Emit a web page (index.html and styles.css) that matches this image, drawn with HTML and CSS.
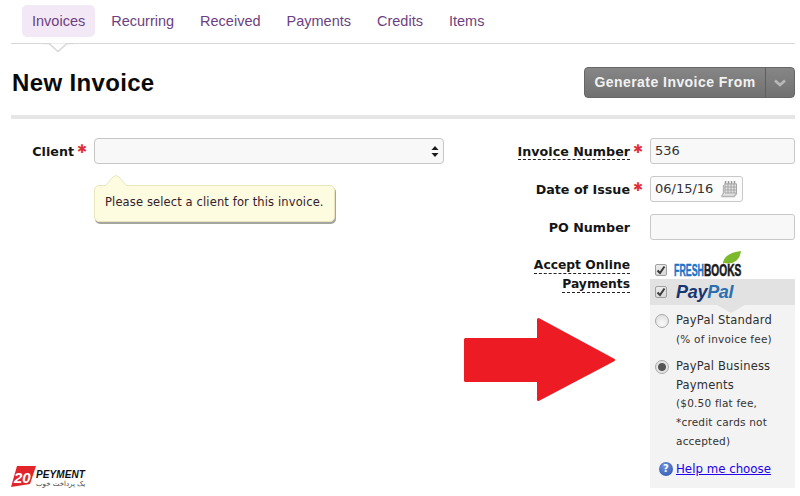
FILE: index.html
```html
<!DOCTYPE html>
<html lang="en">
<head>
<meta charset="utf-8">
<title>New Invoice</title>
<link rel="stylesheet" href="styles.css">
</head>
<body>
<div class="page">
  <nav class="tabs">
    <a class="tab active">Invoices</a>
    <a class="tab">Recurring</a>
    <a class="tab">Received</a>
    <a class="tab">Payments</a>
    <a class="tab">Credits</a>
    <a class="tab">Items</a>
    <svg class="notch" width="30" height="10" viewBox="0 0 30 10"><path d="M0 0.5H6L15 8.5L24 0.5H30" fill="#fff" stroke="#d6d6d6" stroke-width="1.4"/></svg>
  </nav>

  <header class="head">
    <h1>New Invoice</h1>
    <div class="gen">
      <span class="gen-main">Generate Invoice From</span>
      <span class="gen-caret"><svg width="14" height="8" viewBox="0 0 14 8"><path d="M2 1.500L7 6L12 1.500" fill="none" stroke="#b9b9b9" stroke-width="2.600"/></svg></span>
    </div>
  </header>

  <main class="form">
    <section class="left">
      <div class="client">
        <label class="lab client-lab"><span>Client</span><i class="star">✱</i></label>
        <div class="select">
          <svg class="updown" width="8" height="11" viewBox="0 0 8 11"><path d="M4 0L7.500 4H0.500ZM4 11L0.500 7H7.500Z" fill="#1a1a1a"/></svg>
        </div>
      </div>
      <div class="tip">
        <svg class="tip-arrow" width="22" height="11" viewBox="0 0 22 11"><path d="M0 11L8 2Q11 -1 14 2L22 11" fill="#fdfbe0" stroke="#e9e6bd"/></svg>
        Please select a client for this invoice.
      </div>
    </section>

    <section class="right">
      <label class="lab"><span class="dash">Invoice Number</span><i class="star">✱</i></label>
      <div class="input">536</div>

      <label class="lab"><span>Date of Issue</span><i class="star">✱</i></label>
      <div class="input date">06/15/16
        <svg class="cal" width="18" height="19" viewBox="0 0 18 19"><path d="M4 3H17V14L15 17H4L3 13Z" fill="#e2e2e2"/><path d="M1.500 16.500L3.500 13V5M1.500 16.500H14L17 13" fill="none" stroke="#b4b4b4" stroke-width="1.300"/><path d="M5.500 1V4M8.500 1V4M11.500 1V4M14.500 1V4" stroke="#9a9a9a" stroke-width="1.500"/><path d="M5 4H16.500V13H5ZM8 4V13M11 4V13M14 4V13M5 7H16.500M5 10H16.500" fill="none" stroke="#a6a6a6" stroke-width="1"/></svg>
      </div>

      <label class="lab"><span>PO Number</span><i class="star"></i></label>
      <div class="input"></div>

      <label class="lab online"><span class="dash">Accept Online</span><span class="dash">Payments</span></label>
      <div class="pay">
        <div class="fresh">
          <span class="check"><svg width="10" height="10" viewBox="0 0 10 10"><path d="M1.500 5.500L4 8L8.500 1.500" fill="none" stroke="#3a3a3a" stroke-width="2"/></svg></span>
          <svg class="fresh-logo" width="70" height="29" viewBox="0 0 70 29">
            <path d="M50 14C50 7 57 2 68 1C67 9 62 15 51 13Z" fill="#7cb92d"/>
            <text transform="translate(1 25.500) scale(0.52 1)" class="fb-a">FRESH</text>
            <text transform="translate(31 25.500) scale(0.6 1)" class="fb-b">BOOKS</text>
          </svg>
        </div>
        <div class="pp-band">
          <span class="check"><svg width="10" height="10" viewBox="0 0 10 10"><path d="M1.500 5.500L4 8L8.500 1.500" fill="none" stroke="#3a3a3a" stroke-width="2"/></svg></span>
          <span class="pp-logo"><b>Pay</b><b class="pal">Pal</b></span>
          <svg class="pp-arrow" width="28" height="8" viewBox="0 0 28 8"><path d="M0 0H28L14 8Z" fill="#e2e2e2"/></svg>
        </div>
        <div class="pp-panel">
          <div class="opt">
            <span class="radio"></span>
            <div class="opt-text"><div>PayPal Standard</div><small>(% of invoice fee)</small></div>
          </div>
          <div class="opt">
            <span class="radio on"></span>
            <div class="opt-text"><div>PayPal Business</div><div>Payments</div><small>($0.50 flat fee,</small><small>*credit cards not</small><small>accepted)</small></div>
          </div>
          <div class="help"><span class="q">?</span><a class="help-link">Help me choose</a></div>
        </div>
      </div>
    </section>
  </main>
</div>

<svg class="arrow" width="152" height="84" viewBox="0 0 152 84"><path d="M2.500 21.500H75.500V1.500L150.500 42L75.500 81.500V62.500H2.500Z" fill="#ed1c24" stroke="#ed1c24" stroke-width="3" stroke-linejoin="round"/></svg>

<div class="brand">
  <svg class="brand-mark" width="25" height="21" viewBox="0 0 25 21"><path d="M6 0H25L19 18L0 21Z" fill="#e1252b"/><text x="3" y="17" class="brand-num">20</text></svg>
  <div class="brand-text"><b>PEYMENT</b><span dir="rtl" lang="fa">یک پرداخت خوب</span></div>
</div>
</body>
</html>
```
FILE: styles.css
```css
* { box-sizing: border-box; }
html, body { margin: 0; padding: 0; }
body {
  width: 800px;
  height: 496px;
  overflow: hidden;
  position: relative;
  background: #fff;
  font-family: "DejaVu Sans", sans-serif;
  font-size: 12px;
  color: #222;
}
.page { padding: 5px 5px 0 11px; }

/* tabs */
.tabs {
  position: relative;
  display: flex;
  gap: 6px;
  height: 39px;
  padding: 0 0 0 11px;
  align-items: flex-start;
  border-bottom: 1.500px solid #d8d8d8;
  font-family: "Liberation Sans", sans-serif;
  font-size: 14.500px;
  color: #6d3f80;
}
.tab { height: 32px; line-height: 32px; padding: 0 10px; border-radius: 5px; }
.tab.active { background: #f3e9f6; }
.notch { position: absolute; left: 32px; top: 38px; }

/* heading */
.head {
  display: flex;
  justify-content: space-between;
  align-items: flex-start;
  height: 75px;
  padding-top: 23px;
  border-bottom: 4px solid #e6e6e6;
}
h1 {
  margin: 0 0 0 1px;
  font-family: "Liberation Sans", sans-serif;
  font-size: 24px;
  line-height: 32px;
  font-weight: 700;
  letter-spacing: 0.350px;
  color: #0a0a0a;
}
.gen {
  display: flex;
  height: 31px;
  width: 211px;
  background: linear-gradient(#868686, #717171);
  border: 1px solid #666;
  border-radius: 4px;
  color: #f2f2f2;
  font-family: "Liberation Sans", sans-serif;
  font-weight: 700;
  font-size: 14px;
  letter-spacing: 0.450px;
  line-height: 29px;
}
.gen-main { width: 181px; text-align: center; border-right: 1px solid #5f5f5f; white-space: nowrap; }
.gen-caret { flex: 1; display: flex; align-items: center; justify-content: center; }

/* form */
.form { display: flex; justify-content: space-between; padding-top: 19px; }
.left { width: 433px; }
.client { display: flex; gap: 7px; }
.lab {
  display: flex;
  justify-content: flex-end;
  align-items: flex-start;
  font-weight: 700;
  font-size: 12.700px;
  line-height: 28px;
  color: #151515;
  white-space: nowrap;
}
.client-lab { width: 76px; }
.star { width: 13px; padding-left: 3px; font-style: normal; color: #e0303a; font-size: 12px; font-weight: 400; line-height: 23px; }
.dash { border-bottom: 1px dashed #222; line-height: 15px; height: 16px; margin-top: 6px; }
.select {
  position: relative;
  flex: 1;
  height: 26px;
  background: #f8f8f8;
  border: 1px solid #c6c6c6;
  border-radius: 4px;
}
.updown { position: absolute; right: 4px; top: 7px; }
.tip {
  position: relative;
  width: 241px;
  height: 37px;
  margin: 19px 0 0 83px;
  padding-left: 10px;
  line-height: 33px;
  font-size: 11.500px;
  letter-spacing: 0.130px;
  color: #33202c;
  white-space: nowrap;
  background: #fdfbe0;
  border: 1px solid #e9e6bd;
  border-radius: 5px;
  box-shadow: 1px 2px 0 #a5a5a0;
}
.tip-arrow { position: absolute; left: 10px; top: -11px; }

.right {
  width: 300px;
  display: grid;
  grid-template-columns: 1fr 145px;
  column-gap: 7px;
  row-gap: 12px;
  grid-template-rows: 26px 26px 26px auto;
}
.input {
  position: relative;
  height: 26px;
  background: #f8f8f8;
  border: 1px solid #c9c9c9;
  border-radius: 3px;
  padding-left: 4px;
  font-size: 13px;
  line-height: 24px;
  color: #333;
}
.date { width: 93px; background: #fbfbfb; }
.cal { position: absolute; right: 4px; top: 3px; }

.online { flex-direction: column; justify-content: flex-start; align-items: flex-end; margin-right: 13px; padding-top: 6px; font-size: 12.300px; line-height: 15px; gap: 3px; }
.online .dash { margin-top: 0; height: 16px; }

.pay { margin-top: -2px; }
.fresh { display: flex; align-items: flex-end; height: 29px; padding-left: 5px; position: relative; }
.check {
  flex: none;
  width: 12px;
  height: 12px;
  display: flex;
  align-items: center;
  justify-content: center;
  background: linear-gradient(#ececec, #d8d8d8);
  border: 1px solid #a0a0a0;
  border-radius: 2px;
  margin-bottom: 3px;
}
.fresh-logo { position: absolute; left: 23px; top: 0; }
.fb-a { font: 700 17px "Liberation Sans", sans-serif; fill: #1d74c6; stroke: #1d74c6; stroke-width: 0.500; }
.fb-b { font: 700 17px "Liberation Sans", sans-serif; fill: #1a1a1a; stroke: #1a1a1a; stroke-width: 0.600; }
.pp-band {
  position: relative;
  height: 26px;
  display: flex;
  align-items: center;
  gap: 9px;
  padding-left: 5px;
  background: #e2e2e2;
}
.pp-band .check { margin-bottom: 0; }
.pp-logo { font: italic 700 18px "Liberation Sans", sans-serif; color: #17356f; letter-spacing: -0.300px; }
.pp-logo .pal { color: #2a6fb0; }
.pp-arrow { position: absolute; left: 67px; top: 26px; }
.pp-panel { background: #f3f3f3; height: 183px; padding: 6px 0 0 5px; }
.opt { display: flex; gap: 7px; margin-bottom: 8px; }
.radio {
  flex: none;
  width: 14px;
  height: 14px;
  margin-top: 3px;
  border-radius: 50%;
  border: 1px solid #aaa;
  background: radial-gradient(circle at 50% 70%, #fafafa, #d9d9d9);
}
.radio.on { background: radial-gradient(circle, #555 0 3.500px, #e5e5e5 4.500px); }
.opt-text { font-size: 11.500px; line-height: 19px; color: #2f2f2f; letter-spacing: 0.200px; white-space: nowrap; }
.opt-text small { display: block; font-size: 10.500px; line-height: 19px; color: #333; }
.opt + .opt .opt-text div + small { margin-top: -1px; }
.help { display: flex; align-items: center; gap: 3px; margin: 11px 0 0 4px; }
.q {
  width: 14px;
  height: 14px;
  border-radius: 50%;
  background: radial-gradient(circle at 40% 30%, #6f93dc, #2a50ae);
  color: #fff;
  font-weight: 700;
  font-size: 10px;
  line-height: 14px;
  text-align: center;
}
.help-link { color: #2200ee; text-decoration: underline; font-size: 11.800px; }

/* overlays */
.arrow { position: absolute; left: 463px; top: 318px; }
.brand { position: absolute; left: 11px; top: 466px; display: flex; align-items: flex-start; }
.brand-num { font: italic 700 15px "Liberation Sans", sans-serif; fill: #fff; }
.brand-text { margin: 4px 0 0 0; display: flex; flex-direction: column; }
.brand-text b { font: italic 700 10px/10px "Liberation Sans", sans-serif; color: #111; letter-spacing: 0.100px; }
.brand-text span { font-size: 7px; line-height: 9px; color: #444; }
```
